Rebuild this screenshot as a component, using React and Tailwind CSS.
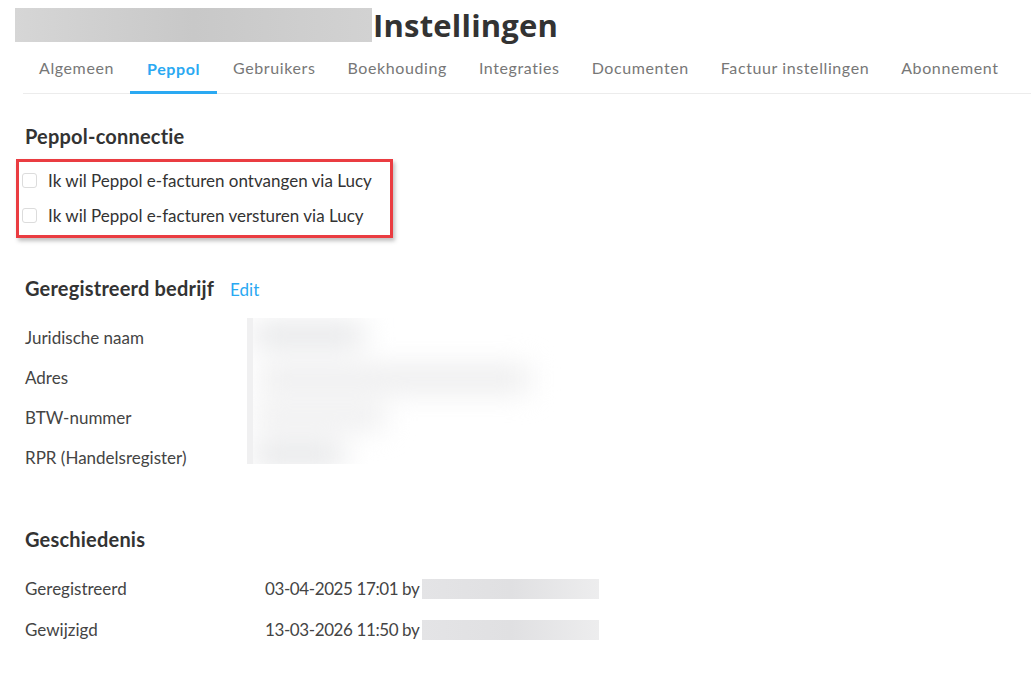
import React from 'react'

const tabs = [
    'Algemeen',
    'Peppol',
    'Gebruikers',
    'Boekhouding',
    'Integraties',
    'Documenten',
    'Factuur instellingen',
    'Abonnement',
]

const companyRows = ['Juridische naam', 'Adres', 'BTW-nummer', 'RPR (Handelsregister)']

const history = [
    { label: 'Geregistreerd', value: '03-04-2025 17:01 by' },
    { label: 'Gewijzigd', value: '13-03-2026 11:50 by' },
]

const Checkbox = ({ label }) => (
    <label className="flex items-center h-[35px]">
        <span className="w-[15px] h-[15px] rounded-[3px] border border-[#dcdcdc] bg-white" />
        <span className="ml-[11px] text-[17px] text-[#333]">{label}</span>
    </label>
)

const App = () => {
    return (
        <div className="w-[1031px] h-[694px] bg-white overflow-hidden font-['Lato',sans-serif] text-[#333]">
            {/* Title */}
            <div className="flex items-end pl-[15px] pt-[8px] h-[46px]">
                <div className="w-[357px] h-[34px] bg-gradient-to-r from-[#d6d6d6] via-[#c8c8c8] to-[#d2d2d2] self-start" />
                <h1 className="ml-[1px] -mt-[2px] self-start text-[31px] leading-[38px] font-bold text-[#333] font-['Open_Sans',sans-serif] tracking-[0.2px]">
                    Instellingen
                </h1>
            </div>

            {/* Tabs */}
            <nav className="ml-[23px] mt-[1px] flex border-b border-[#ececec] h-[47px]">
                {tabs.map((tab) => {
                    const active = tab === 'Peppol'
                    return (
                        <div
                            key={tab}
                            className={
                                active
                                    ? 'shrink-0 whitespace-nowrap px-[17px] flex items-center border-b-[3px] border-[#2aa9f2] text-[#2aa9f2] font-bold -mb-[1px] pb-[1px]'
                                    : 'shrink-0 whitespace-nowrap px-[16px] flex items-center text-[#777] pb-[5px]'
                            }
                        >
                            <span className="text-[16px] tracking-[0.6px]">{tab}</span>
                        </div>
                    )
                })}
            </nav>

            <main className="pl-[25px]">
                {/* Peppol-connectie */}
                <h2 className="mt-[30px] text-[20px] leading-[24px] font-bold tracking-[0.2px]">Peppol-connectie</h2>
                <div className="-ml-[9px] mt-[11px] w-[377px] h-[79px] border-[3px] border-[#ea3c41] shadow-[2px_3px_4px_rgba(0,0,0,0.25)] pl-[3px] pt-[1px]">
                    <Checkbox label="Ik wil Peppol e-facturen ontvangen via Lucy" />
                    <Checkbox label="Ik wil Peppol e-facturen versturen via Lucy" />
                </div>

                {/* Geregistreerd bedrijf */}
                <div className="mt-[38px] flex items-baseline">
                    <h2 className="text-[20px] leading-[24px] font-bold tracking-[0.2px]">Geregistreerd bedrijf</h2>
                    <span className="ml-[16px] text-[17px] text-[#2aa9f2]">Edit</span>
                </div>
                <div className="mt-[15px] flex">
                    <div className="w-[222px] flex flex-col">
                        {companyRows.map((row) => (
                            <div key={row} className="h-[40px] flex items-center text-[17px] text-[#444]">
                                {row}
                            </div>
                        ))}
                    </div>
                    <div className="relative w-[320px] h-[146px] overflow-hidden">
                        <div className="absolute inset-0 blur-[14px]">
                            <div className="ml-[6px] mt-[6px] w-[110px] h-[22px] bg-[#e2e3e5] rounded" />
                            <div className="ml-[12px] mt-[20px] w-[270px] h-[26px] bg-[#ececed] rounded" />
                            <div className="ml-[8px] mt-[14px] w-[130px] h-[22px] bg-[#ececed] rounded" />
                            <div className="ml-[6px] mt-[16px] w-[90px] h-[22px] bg-[#e2e3e5] rounded" />
                        </div>
                        <div className="absolute left-0 top-0 bottom-0 w-[6px] bg-[#f0f0f1]" />
                    </div>
                </div>

                {/* Geschiedenis */}
                <h2 className="mt-[49px] text-[20px] leading-[24px] font-bold tracking-[0.2px]">Geschiedenis</h2>
                <div className="mt-[18px] flex flex-col">
                    {history.map((row) => (
                        <div key={row.label} className="h-[41px] flex items-center text-[17px] text-[#444]">
                            <span className="w-[240px]">{row.label}</span>
                            <span className="tracking-[-0.4px]">{row.value}</span>
                            <span className="ml-[3px] w-[177px] h-[20px] bg-gradient-to-r from-[#e4e4e6] via-[#e0e0e2] to-[#ededee]" />
                        </div>
                    ))}
                </div>
            </main>
        </div>
    )
}

export default App
